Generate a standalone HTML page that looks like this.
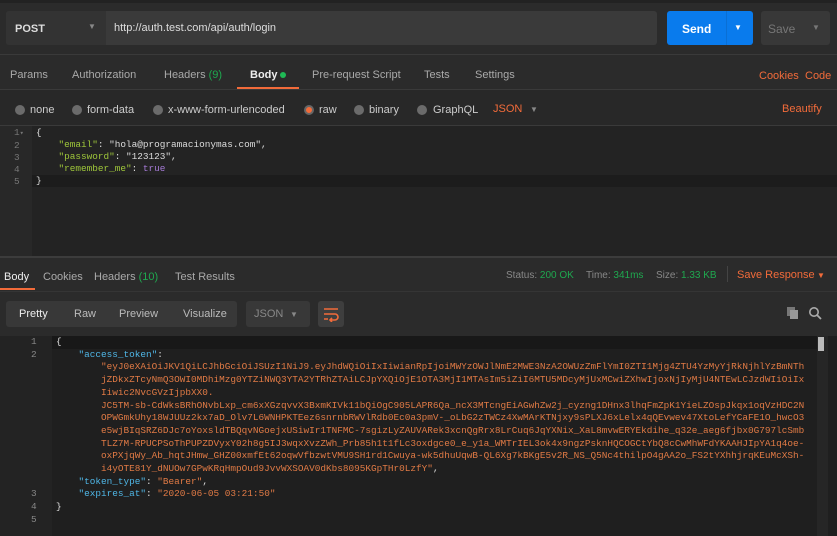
<!DOCTYPE html>
<html><head><style>
*{margin:0;padding:0;box-sizing:border-box}
body{width:837px;height:536px;background:#2b2b2b;font-family:"Liberation Sans",sans-serif;font-size:11px;color:#ccc;position:relative;overflow:hidden}
.a{position:absolute;white-space:pre}
.m{font-family:"Liberation Mono",monospace;font-size:9.4px}
.o{color:#f26b3a}
.g{color:#1fa84f}
.rad{position:absolute;width:10px;height:10px;border-radius:50%;background:#6b6b6b}
.k{color:#9fc73a}.p{color:#a57ad6}
.b{color:#4fb6e6}.s{color:#e07a45}
</style></head><body>
<div class="a" style="left:0;top:0;width:837px;height:3px;background:#222"></div>
<div class="a" style="left:6px;top:11px;width:651px;height:34px;background:#3a3a3a;border-radius:3px"></div>
<div class="a" style="left:6px;top:11px;width:100px;height:34px;background:#333;border-radius:3px 0 0 3px"></div>
<div class="a" style="left:15px;top:23px;font-weight:bold;color:#ddd">POST</div>
<div class="a" style="left:88px;top:22px;color:#888;font-size:8px">▼</div>
<div class="a" style="left:114px;top:22px;color:#ddd">http://auth.test.com/api/auth/login</div>
<div class="a" style="left:667px;top:11px;width:86px;height:34px;background:#097bed;border-radius:3px"></div>
<div class="a" style="left:726px;top:11px;width:1px;height:34px;background:#0a6fd4"></div>
<div class="a" style="left:682px;top:22px;color:#fff;font-weight:bold;font-size:12px">Send</div>
<div class="a" style="left:734px;top:23px;color:#fff;font-size:8px">▼</div>
<div class="a" style="left:761px;top:11px;width:69px;height:34px;background:#383838;border-radius:3px"></div>
<div class="a" style="left:768px;top:22px;color:#777;font-size:12px">Save</div>
<div class="a" style="left:812px;top:23px;color:#777;font-size:8px">▼</div>
<div class="a" style="left:0;top:54px;width:837px;height:1px;background:#3a3a3a"></div>
<div class="a" style="left:10px;top:69px;color:#aaa">Params</div>
<div class="a" style="left:72px;top:69px;color:#aaa">Authorization</div>
<div class="a" style="left:164px;top:69px;color:#aaa">Headers <span class="g">(9)</span></div>
<div class="a" style="left:250px;top:69px;color:#eee;font-weight:bold">Body</div>
<div class="a" style="left:280px;top:72px;width:6px;height:6px;border-radius:50%;background:#1fb955"></div>
<div class="a" style="left:237px;top:87px;width:62px;height:2px;background:#f26b3a"></div>
<div class="a" style="left:312px;top:69px;color:#aaa">Pre-request Script</div>
<div class="a" style="left:424px;top:69px;color:#aaa">Tests</div>
<div class="a" style="left:475px;top:69px;color:#aaa">Settings</div>
<div class="a o" style="left:759px;top:70px">Cookies</div>
<div class="a o" style="left:805px;top:70px">Code</div>
<div class="a" style="left:0;top:89px;width:837px;height:1px;background:#3a3a3a"></div>
<div class="a" style="left:0;top:90px;width:837px;height:35px;background:#282828"></div>
<div class="rad" style="left:15px;top:105px"></div><div class="a" style="left:30px;top:104px;color:#ccc">none</div>
<div class="rad" style="left:72px;top:105px"></div><div class="a" style="left:87px;top:104px;color:#ccc">form-data</div>
<div class="rad" style="left:153px;top:105px"></div><div class="a" style="left:168px;top:104px;color:#ccc">x-www-form-urlencoded</div>
<div class="rad" style="left:304px;top:105px;background:#f26b3a;border:2px solid #666"></div><div class="a" style="left:319px;top:104px;color:#ccc">raw</div>
<div class="rad" style="left:354px;top:105px"></div><div class="a" style="left:369px;top:104px;color:#ccc">binary</div>
<div class="rad" style="left:417px;top:105px"></div><div class="a" style="left:433px;top:104px;color:#ccc">GraphQL</div>
<div class="a o" style="left:493px;top:103px">JSON</div>
<div class="a" style="left:530px;top:105px;color:#888;font-size:8px">▼</div>
<div class="a o" style="left:782px;top:103px">Beautify</div>
<div class="a" style="left:0;top:125px;width:837px;height:1px;background:#3a3a3a"></div>
<div class="a" style="left:0;top:126px;width:837px;height:130px;background:#232323"></div>
<div class="a" style="left:0;top:126px;width:32px;height:130px;background:#282828"></div>
<div class="a" style="left:32px;top:175px;width:805px;height:12px;background:#1c1c1c"></div>
<div class="a m" style="left:14px;top:127px;color:#777;line-height:12px">1<span style="font-size:7px">▾</span>
2
3
4
5</div>
<div class="a m" style="left:36px;top:127px;color:#ddd;line-height:12px">{
    <span class="k">"email"</span>: "hola@programacionymas.com",
    <span class="k">"password"</span>: "123123",
    <span class="k">"remember_me"</span>: <span class="p">true</span>
}</div>
<div class="a" style="left:0;top:256px;width:837px;height:2px;background:#3c3c3c"></div>
<div class="a" style="left:4px;top:271px;color:#eee">Body</div>
<div class="a" style="left:0;top:288px;width:35px;height:2px;background:#f26b3a"></div>
<div class="a" style="left:43px;top:271px;color:#aaa">Cookies</div>
<div class="a" style="left:94px;top:271px;color:#aaa">Headers <span class="g">(10)</span></div>
<div class="a" style="left:175px;top:271px;color:#aaa">Test Results</div>
<div class="a" style="left:506px;top:270px;color:#888;font-size:10px">Status: <span class="g">200 OK</span></div>
<div class="a" style="left:586px;top:270px;color:#888;font-size:10px">Time: <span class="g">341ms</span></div>
<div class="a" style="left:656px;top:270px;color:#888;font-size:10px">Size: <span class="g">1.33 KB</span></div>
<div class="a" style="left:727px;top:266px;width:1px;height:16px;background:#444"></div>
<div class="a o" style="left:737px;top:269px">Save Response</div>
<div class="a o" style="left:817px;top:271px;font-size:8px">▼</div>
<div class="a" style="left:0;top:291px;width:837px;height:1px;background:#353535"></div>
<div class="a" style="left:6px;top:301px;width:231px;height:26px;background:#383838;border-radius:3px"></div>
<div class="a" style="left:19px;top:308px;color:#eee">Pretty</div>
<div class="a" style="left:74px;top:308px;color:#bbb">Raw</div>
<div class="a" style="left:119px;top:308px;color:#bbb">Preview</div>
<div class="a" style="left:183px;top:308px;color:#bbb">Visualize</div>
<div class="a" style="left:246px;top:301px;width:64px;height:26px;background:#383838;border-radius:3px"></div>
<div class="a" style="left:254px;top:308px;color:#888">JSON</div>
<div class="a" style="left:290px;top:310px;color:#888;font-size:8px">▼</div>
<div class="a" style="left:318px;top:301px;width:26px;height:26px;background:#3e3e3e;border-radius:3px"></div>
<svg class="a" style="left:322px;top:306px" width="18" height="16" viewBox="0 0 18 16"><path d="M2 3h14M2 8h11a3 3 0 0 1 0 6H9M2 13h4M10 12l-2 2 2 2" stroke="#f26b3a" stroke-width="1.6" fill="none"/></svg>
<svg class="a" style="left:786px;top:306px" width="14" height="14"><rect x="1" y="1" width="8" height="9" fill="#777"/><rect x="4" y="4" width="8" height="9" fill="#999"/></svg>
<svg class="a" style="left:808px;top:306px" width="14" height="14"><circle cx="6" cy="6" r="4.2" stroke="#aaa" stroke-width="1.6" fill="none"/><path d="M9 9l4 4" stroke="#aaa" stroke-width="1.8"/></svg>
<div class="a" style="left:0;top:336px;width:837px;height:200px;background:#1f1f1f"></div>
<div class="a" style="left:0;top:336px;width:52px;height:200px;background:#232323"></div>
<div class="a" style="left:52px;top:336px;width:765px;height:13px;background:#181818"></div>
<div class="a" style="left:817px;top:336px;width:11px;height:200px;background:#262626"></div>
<div class="a" style="left:818px;top:337px;width:6px;height:14px;background:#bbb"></div>
<div class="a m" style="left:31px;top:336px;color:#888;line-height:12.7px">1
2










3
4
5</div>
<div class="a m" style="left:56px;top:336px;color:#ddd;line-height:12.7px">{
    <span class="b">"access_token"</span>:
<span class="s">        "eyJ0eXAiOiJKV1QiLCJhbGciOiJSUzI1NiJ9.eyJhdWQiOiIxIiwianRpIjoiMWYzOWJlNmE2MWE3NzA2OWUzZmFlYmI0ZTI1Mjg4ZTU4YzMyYjRkNjhlYzBmNTh
        jZDkxZTcyNmQ3OWI0MDhiMzg0YTZiNWQ3YTA2YTRhZTAiLCJpYXQiOjE1OTA3MjI1MTAsIm5iZiI6MTU5MDcyMjUxMCwiZXhwIjoxNjIyMjU4NTEwLCJzdWIiOiIx
        Iiwic2NvcGVzIjpbXX0.
        JC5TM-sb-CdWksBRhONvbLxp_cm6xXGzqvvX3BxmKIVk11bQiOgC905LAPR6Qa_ncX3MTcngEiAGwhZw2j_cyzng1DHnx3lhqFmZpK1YieLZOspJkqx1oqVzHDC2N
        OPWGmkUhy18WJUUz2kx7aD_Olv7L6WNHPKTEez6snrnbRWVlRdb0Ec0a3pmV-_oLbG2zTWCz4XwMArKTNjxy9sPLXJ6xLelx4qQEvwev47XtoLefYCaFE1O_hwcO3
        e5wjBIqSRZ6DJc7oYoxsldTBQqvNGoejxUSiwIr1TNFMC-7sgizLyZAUVARek3xcnQgRrx8LrCuq6JqYXNix_XaL8mvwERYEkdihe_q32e_aeg6fjbx0G797lcSmb
        TLZ7M-RPUCPSoThPUPZDVyxY02h8g5IJ3wqxXvzZWh_Prb85h1t1fLc3oxdgce0_e_y1a_WMTrIEL3ok4x9ngzPsknHQCOGCtYbQ8cCwMhWFdYKAAHJIpYA1q4oe-
        oxPXjqWy_Ab_hqtJHmw_GHZ00xmfEt62oqwVfbzwtVMU9SH1rd1Cwuya-wk5dhuUqwB-QL6Xg7kBKgE5v2R_NS_Q5Nc4thilpO4gAA2o_FS2tYXhhjrqKEuMcXSh-
        i4yOTE81Y_dNUOw7GPwKRqHmpOud9JvvWXSOAV0dKbs8095KGpTHr0LzfY"</span>,
    <span class="b">"token_type"</span>: <span class="s">"Bearer"</span>,
    <span class="b">"expires_at"</span>: <span class="s">"2020-06-05 03:21:50"</span>
}</div>
</body></html>
